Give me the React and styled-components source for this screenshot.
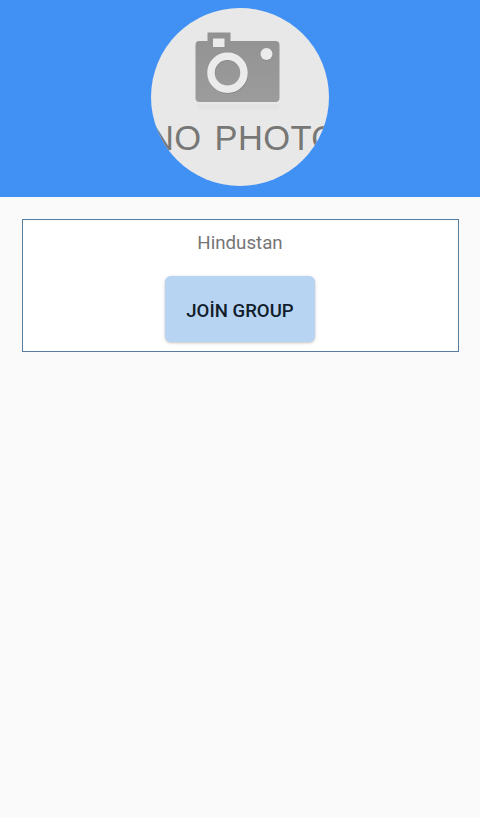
import styled, { createGlobalStyle } from "styled-components";

const GlobalStyle = createGlobalStyle`
  * {
    box-sizing: border-box;
  }
  body {
    margin: 0;
    background-color: #fafafa;
    font-family: Roboto, "Liberation Sans", sans-serif;
  }
`;

const NoPhoto = () => {
  return (
    <svg width="178" height="178" viewBox="151 8 178 178">
      <defs>
        <linearGradient id="body" x1="0" y1="0" x2="0" y2="1">
          <stop offset="0" stopColor="#929292" />
          <stop offset="1" stopColor="#9c9c9c" />
        </linearGradient>
        <linearGradient id="reflection" x1="0" y1="0" x2="0" y2="1">
          <stop offset="0" stopColor="#e1e1e1" />
          <stop offset="1" stopColor="#e8e8e8" />
        </linearGradient>
      </defs>
      <rect x="197" y="104.5" width="82" height="7" fill="url(#reflection)" />
      <path
        d="M207.5 32.5h23v8.5h45a4 4 0 0 1 4 4v53a4 4 0 0 1-4 4h-76a4 4 0 0 1-4-4v-53a4 4 0 0 1 4-4h8z"
        fill="url(#body)"
      />
      <rect x="213" y="38.5" width="11.5" height="8.5" fill="#ebebeb" />
      <circle cx="228" cy="73.5" r="16.5" fill="none" stroke="#858585" strokeWidth="7.5" />
      <circle cx="227.5" cy="72.7" r="16.5" fill="none" stroke="#ebebeb" strokeWidth="7.5" />
      <circle cx="267" cy="54.8" r="6" fill="#858585" />
      <circle cx="266.5" cy="54" r="6" fill="#ebebeb" />
      <text
        x="149"
        y="150"
        fontFamily="Liberation Sans, Arial, sans-serif"
        fontSize="34.5"
        letterSpacing="0.4"
        wordSpacing="3"
        fill="#777775"
      >
        NO PHOTO
      </text>
    </svg>
  );
};

const App = () => {
  return (
    <>
      <GlobalStyle />
      <Header>
        <Avatar>
          <NoPhoto />
        </Avatar>
      </Header>
      <Content>
        <GroupCard>
          <GroupName>Hindustan</GroupName>
          <JoinButton type="button">JOİN GROUP</JoinButton>
        </GroupCard>
      </Content>
    </>
  );
};

const Header = styled.header`
  display: flex;
  justify-content: center;
  height: 197px;
  padding-top: 8px;
  background-color: #4190f4;
`;

const Avatar = styled.div`
  width: 178px;
  height: 178px;
  border-radius: 50%;
  overflow: hidden;
  background-color: #e8e8e8;
  svg {
    display: block;
  }
`;

const Content = styled.main`
  padding: 22px 21px 0 22px;
`;

const GroupCard = styled.section`
  display: flex;
  flex-direction: column;
  align-items: center;
  height: 133px;
  padding: 12px 1px 0 0;
  border: 1px solid #587ca0;
  background-color: #fff;
`;

const GroupName = styled.p`
  margin: 0;
  font-size: 18.7px;
  line-height: 22px;
  color: #757575;
`;

const JoinButton = styled.button`
  width: 150px;
  height: 66px;
  margin-top: 22px;
  padding: 4px 0 0;
  border: none;
  border-radius: 6px;
  background-color: #b7d4f3;
  box-shadow: 0 1px 3px rgba(0, 0, 0, 0.25);
  font-family: inherit;
  font-size: 18.6px;
  font-weight: 500;
  color: #111d2b;
`;

export default App;
